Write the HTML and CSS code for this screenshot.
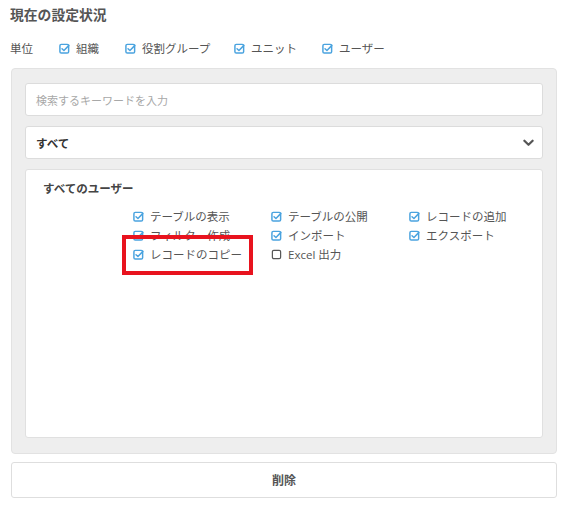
FILE: index.html
```html
<!DOCTYPE html>
<html lang="ja">
<head>
<meta charset="utf-8">
<link rel="stylesheet" href="styles.css">
</head>
<body>
<div class="page">
  <h1 class="title">現在の設定状況</h1>
  <div class="units">
    <span class="units-label">単位</span>
    <span class="chk"><svg class="ico on" viewBox="0 0 12 12"><rect x="1" y="1.5" width="9.5" height="9.5" rx="1.5"/><path d="M3.3 6.2 L5.4 8.2 L10.8 2.6"/></svg>組織</span>
    <span class="chk"><svg class="ico on" viewBox="0 0 12 12"><rect x="1" y="1.5" width="9.5" height="9.5" rx="1.5"/><path d="M3.3 6.2 L5.4 8.2 L10.8 2.6"/></svg>役割グループ</span>
    <span class="chk"><svg class="ico on" viewBox="0 0 12 12"><rect x="1" y="1.5" width="9.5" height="9.5" rx="1.5"/><path d="M3.3 6.2 L5.4 8.2 L10.8 2.6"/></svg>ユニット</span>
    <span class="chk"><svg class="ico on" viewBox="0 0 12 12"><rect x="1" y="1.5" width="9.5" height="9.5" rx="1.5"/><path d="M3.3 6.2 L5.4 8.2 L10.8 2.6"/></svg>ユーザー</span>
  </div>
  <div class="panel">
    <div class="field placeholder">検索するキーワードを入力</div>
    <div class="field select">
      <span>すべて</span>
      <svg class="chev" viewBox="0 0 12 8"><path d="M1.5 1.5 L6 6 L10.5 1.5"/></svg>
    </div>
    <div class="box">
      <div class="box-title">すべてのユーザー</div>
      <div class="perms">
        <span class="chk"><svg class="ico on" viewBox="0 0 12 12"><rect x="1" y="1.5" width="9.5" height="9.5" rx="1.5"/><path d="M3.3 6.2 L5.4 8.2 L10.8 2.6"/></svg>テーブルの表示</span>
        <span class="chk"><svg class="ico on" viewBox="0 0 12 12"><rect x="1" y="1.5" width="9.5" height="9.5" rx="1.5"/><path d="M3.3 6.2 L5.4 8.2 L10.8 2.6"/></svg>テーブルの公開</span>
        <span class="chk"><svg class="ico on" viewBox="0 0 12 12"><rect x="1" y="1.5" width="9.5" height="9.5" rx="1.5"/><path d="M3.3 6.2 L5.4 8.2 L10.8 2.6"/></svg>レコードの追加</span>
        <span class="chk"><svg class="ico on" viewBox="0 0 12 12"><rect x="1" y="1.5" width="9.5" height="9.5" rx="1.5"/><path d="M3.3 6.2 L5.4 8.2 L10.8 2.6"/></svg>フィルター作成</span>
        <span class="chk"><svg class="ico on" viewBox="0 0 12 12"><rect x="1" y="1.5" width="9.5" height="9.5" rx="1.5"/><path d="M3.3 6.2 L5.4 8.2 L10.8 2.6"/></svg>インポート</span>
        <span class="chk"><svg class="ico on" viewBox="0 0 12 12"><rect x="1" y="1.5" width="9.5" height="9.5" rx="1.5"/><path d="M3.3 6.2 L5.4 8.2 L10.8 2.6"/></svg>エクスポート</span>
        <span class="chk"><svg class="ico on" viewBox="0 0 12 12"><rect x="1" y="1.5" width="9.5" height="9.5" rx="1.5"/><path d="M3.3 6.2 L5.4 8.2 L10.8 2.6"/></svg>レコードのコピー</span>
        <span class="chk"><svg class="ico off" viewBox="0 0 12 12"><rect x="1.5" y="1.5" width="9" height="9" rx="1.5"/></svg>Excel 出力</span>
      </div>
      <div class="highlight"></div>
    </div>
  </div>
  <div class="btn">削除</div>
</div>
</body>
</html>
```

FILE: styles.css
```css
* { box-sizing: border-box; }
html, body { margin: 0; padding: 0; background: #fff; }
body {
  font-family: "Open Sans", "Noto Sans CJK JP", sans-serif;
  font-size: 11.5px;
  color: #555;
}
.page {
  width: 546px;
  margin-left: 11px;
  padding-top: 5px;
}
.title {
  margin: 0 0 0 -1px;
  font-size: 13.8px;
  font-weight: bold;
  line-height: 20px;
  color: #555;
}
.units {
  display: flex;
  align-items: center;
  height: 22px;
  margin-top: 12px;
  margin-left: -1px;
}
.units-label { width: 49px; }
.units .chk:nth-child(2) { width: 66px; }
.units .chk:nth-child(3) { width: 109px; }
.units .chk:nth-child(4) { width: 88px; }
.chk {
  display: inline-flex;
  align-items: center;
  white-space: nowrap;
  line-height: 19px;
}
.ico {
  width: 11px;
  height: 11px;
  margin-right: 6px;
  flex: none;
  fill: none;
  stroke-width: 1.6;
  stroke-linecap: round;
  stroke-linejoin: round;
}
.ico.on { stroke: #4aa3df; }
.ico.off { stroke: #555; stroke-width: 1.3; }
.panel {
  margin-top: 9px;
  background: #eeeeee;
  border: 1px solid #e2e2e2;
  border-radius: 4px;
  padding: 14px 13px 15px 13px;
  display: flex;
  flex-direction: column;
  gap: 10px;
}
.field {
  height: 33px;
  background: #fff;
  border: 1px solid #dcdcdc;
  border-radius: 3px;
  padding: 0 10px;
  display: flex;
  align-items: center;
}
.placeholder { color: #a8a8a8; font-size: 11px; }
.select {
  justify-content: space-between;
  font-weight: bold;
  color: #333;
  padding-right: 8px;
}
.chev {
  width: 11px;
  height: 8px;
  fill: none;
  stroke: #555;
  stroke-width: 2.4;
  stroke-linecap: round;
  stroke-linejoin: round;
}
.box {
  position: relative;
  height: 269px;
  background: #fff;
  border: 1px solid #e0e0e0;
  border-radius: 3px;
  padding: 10px 17px;
}
.box-title {
  font-weight: bold;
  color: #444;
  line-height: 18px;
}
.perms {
  display: grid;
  grid-template-columns: 138px 138px 138px;
  margin-left: 90px;
  margin-top: 9px;
}
.highlight {
  position: absolute;
  left: 96px;
  top: 65px;
  width: 131px;
  height: 40px;
  border: 4px solid #e8131e;
}
.btn {
  margin-top: 8px;
  height: 36px;
  border: 1px solid #dedede;
  border-radius: 3px;
  display: flex;
  align-items: center;
  justify-content: center;
  font-weight: bold;
  font-size: 12px;
  color: #555;
}
```
